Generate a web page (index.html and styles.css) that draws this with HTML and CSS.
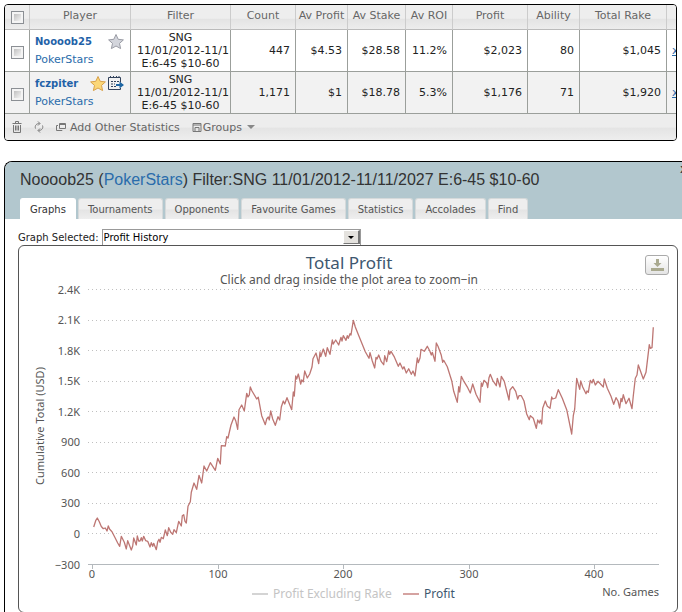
FILE: index.html
```html
<!DOCTYPE html>
<html lang="en">
<head>
<meta charset="utf-8">
<title>Player statistics</title>
<link rel="stylesheet" href="styles.css">
</head>
<body>
<section class="results">
  <table class="grid">
    <colgroup>
      <col class="c-check"><col class="c-player"><col class="c-filter"><col class="c-count"><col class="c-avprofit"><col class="c-stake"><col class="c-roi"><col class="c-profit"><col class="c-ability"><col class="c-rake"><col>
    </colgroup>
    <thead>
      <tr>
        <th><input type="checkbox" class="tick" aria-label="Select all"></th>
        <th>Player</th><th>Filter</th><th>Count</th><th>Av Profit</th><th>Av Stake</th><th>Av ROI</th><th>Profit</th><th>Ability</th><th>Total Rake</th><th></th>
      </tr>
    </thead>
    <tbody>
      <tr>
        <td class="center"><input type="checkbox" class="tick" aria-label="Select Noooob25"></td>
        <td class="player">
          <div class="name-row"><a class="name" href="#">Noooob25</a>
            <span class="marks"><svg width="18" height="18" viewBox="0 0 18 18"><path class="star-off" d="M9 1.500l2.200 4.800 5.200.6-3.900 3.500 1.100 5.200L9 13l-4.600 2.600 1.100-5.200L1.600 6.900l5.200-.6z"/></svg></span>
          </div>
          <a class="site" href="#">PokerStars</a>
        </td>
        <td class="filter">SNG<br>11/01/2012-11/11/2027<br>E:6-45 $10-60</td>
        <td>447</td><td>$4.53</td><td>$28.58</td><td>11.2%</td><td>$2,023</td><td>80</td><td>$1,045</td>
        <td class="more"><a href="#">x</a></td>
      </tr>
      <tr>
        <td class="center"><input type="checkbox" class="tick" aria-label="Select fczpiter"></td>
        <td class="player">
          <div class="name-row"><a class="name" href="#">fczpiter</a>
            <span class="marks"><svg width="18" height="18" viewBox="0 0 18 18"><path class="star-on" d="M9 1.500l2.200 4.800 5.200.6-3.900 3.500 1.100 5.200L9 13l-4.600 2.600 1.100-5.200L1.600 6.900l5.200-.6z"/></svg><svg width="18" height="18" viewBox="0 0 18 18"><path class="cal" d="M1.500 2.500h12v5M13.500 13v1.500h-12v-12M3.500 1v2M6.500 1v2M9.500 1v2M12 1v2"/><path class="cal-dots" d="M4 6.500h8M4 9h4M4 11.500h5"/><path class="cal-arrow" d="M9 9h3.500V6.500L17 10l-4.500 3.500V11H9z"/></svg></span>
          </div>
          <a class="site" href="#">PokerStars</a>
        </td>
        <td class="filter">SNG<br>11/01/2012-11/11/2027<br>E:6-45 $10-60</td>
        <td>1,171</td><td>$1</td><td>$18.78</td><td>5.3%</td><td>$1,176</td><td>71</td><td>$1,920</td>
        <td class="more"><a href="#">x</a></td>
      </tr>
    </tbody>
  </table>
  <div class="toolbar">
    <button type="button" class="tool" aria-label="Delete"><svg width="10" height="12" viewBox="0 0 10 12"><path class="ico" d="M.5 2.500h9M3.500 2V.5h3V2M1.500 4v7.500h7V4M3.500 4.500v5M5 4.500v5M6.500 4.500v5"/></svg></button>
    <button type="button" class="tool" aria-label="Refresh"><svg width="10" height="12" viewBox="0 0 10 12"><path class="ico" d="M1.500 7.500c-1-3 1-5 4-5M4 .5l2 2-2 2M8.500 4.500c1 3-1 5-4 5M6 7.500l-2 2 2 2"/></svg></button>
    <button type="button" class="tool"><svg width="10" height="12" viewBox="0 0 10 12"><path class="ico" d="M3.500 2.500h6v5h-6zM3.500 3.500h6M2 4.500H.5v5H6V9"/></svg><span>Add Other Statistics</span></button>
    <button type="button" class="tool groups"><svg width="10" height="12" viewBox="0 0 10 12"><path class="ico" d="M1 2.500h8v8H1zM1 4h8M3 10V6.500h4V10"/></svg><span>Groups</span><i class="caret"></i></button>
  </div>
</section>

<section class="detail">
  <header class="detail-head">
    <button type="button" class="close" aria-label="Close">x</button>
    <h1>Noooob25 (<a href="#">PokerStars</a>) Filter:SNG 11/01/2012-11/11/2027 E:6-45 $10-60</h1>
    <nav class="tabs">
      <a class="tab active" href="#">Graphs</a>
      <a class="tab" href="#">Tournaments</a>
      <a class="tab" href="#">Opponents</a>
      <a class="tab" href="#">Favourite Games</a>
      <a class="tab" href="#">Statistics</a>
      <a class="tab" href="#">Accolades</a>
      <a class="tab" href="#">Find</a>
    </nav>
  </header>
  <div class="picker">
    <label for="graph">Graph Selected:</label>
    <div class="select-box">
      <select id="graph"><option>Profit History</option></select>
      <span class="select-arrow"><i></i></span>
    </div>
  </div>
  <div class="chart">
    <button type="button" class="download" aria-label="Download chart"><svg width="14" height="14" viewBox="0 0 14 14"><path d="M6 1h3v4h2.500L7.500 9 3.500 5H6zM1 10h13v3H1z"/></svg></button>
    <svg class="plot" viewBox="19 247 658 366" role="img" aria-label="Total profit by number of games">
      <text class="title" x="349" y="270">Total Profit</text>
      <text class="subtitle" x="349" y="285">Click and drag inside the plot area to zoom−in</text>
      <path class="lines" d="M88 290.500H659M88 321.500H659M88 351.500H659M88 382.500H659M88 412.500H659M88 443.500H659M88 473.500H659M88 504.500H659M88 534.500H659"/>
      <path class="axis" d="M88 565.500H659M92.500 565v5M218.500 565v5M343.500 565v5M469.500 565v5M594.500 565v5"/>
      <g class="y-labels">
        <text x="80" y="295">2.4K</text><text x="80" y="325">2.1K</text><text x="80" y="356">1.8K</text><text x="80" y="386">1.5K</text><text x="80" y="417">1.2K</text><text x="80" y="447">900</text><text x="80" y="478">600</text><text x="80" y="508">300</text><text x="80" y="539">0</text><text x="80" y="570">−300</text>
      </g>
      <g class="x-labels">
        <text x="92" y="579">0</text><text x="218" y="579">100</text><text x="343" y="579">200</text><text x="469" y="579">300</text><text x="594" y="579">400</text>
      </g>
      <text class="axis-title" transform="translate(44 427) rotate(-90)">Cumulative Total (USD)</text>
      <text class="axis-title end" x="659" y="597">No. Games</text>
      <polyline class="series" points="93.7,528 95.7,521.7 97.3,519 99.3,522.7 101.3,527.5 103.3,529.7 105.3,529 107,532 108.3,527 109.7,530.3 112,532.7 114.7,538 117.7,544 119.7,547.3 121.3,537.3 124.3,543.3 126.3,550 127.7,541.7 131.3,551 132.7,547 133.7,539 136.3,546 137.3,537 138.7,542 140,542 141.3,538.7 142.3,542 143.7,537.3 145.7,541.7 147.7,542.3 150,548 151.3,543.7 152.7,547.3 153.7,544.3 156.3,550.7 157.7,542.7 159,540.3 160,543.3 161.3,538.3 163.3,539.7 165.3,531 167.3,536.7 168.7,528.7 170.7,533.3 172.7,535.3 174,530.7 176.3,533.7 178.7,522.3 181.3,527 182.3,516.7 183.7,515.7 185,522.3 186.3,524 188,507.3 190.3,502.7 191.3,493.3 194,484 196.7,490.3 199,476.3 201.7,484 204,467 206.7,472 210.3,463.7 215.3,471.3 217.7,459.3 220.3,465 221.3,446.7 225.3,447 226.7,437.7 228,439 231,426 234,418 235.7,421.7 237.7,430.3 239,410.7 241.7,406 244.3,412 246.7,394.3 248,398 249.3,396 250.3,388 252,392 256.7,400 258.3,398.3 261.7,416.7 265.3,425.7 266.7,420 268.3,418 269.3,421 270.7,412 272.7,420 275.3,426.3 278,417.7 279.7,421 281.3,408 283.3,402 284.7,405 287,398.7 291.7,410.7 293.3,393 294.3,397 295.7,377 296.7,380 298.3,375 300.7,385 301.7,381 303.3,382.7 304.7,372 307.3,379 309.7,375 312,368 313,359.7 316,354 318.7,364.7 320,353 320.7,357.7 323.3,350 325.7,357.3 327.3,348.7 330,355.3 332.3,341 333.3,345 335.7,341 338.7,346 341,338.3 342,342 343.3,336.7 346,341.3 347.3,336.7 348.3,339.3 350,334.7 351,336 353.3,321.3 355.3,328 359,337.3 365.3,352.7 369,359.3 370,353.7 372.3,362 374.7,369 376,358.3 377,360 378.7,356 381.3,362.7 383.7,365.7 384.7,356.7 386.7,362.7 388.7,352 389.7,355.3 391,352.3 394,357.3 398.3,367.3 400,364 402.7,370 404,367.7 406.3,374 408.7,369.7 411.3,375.3 413,372 415,377 417.3,359 418.3,363.7 420,359 421,350.3 424.3,352.3 427.3,347.3 429.7,351.7 431.3,356 432.3,353.3 435,362.3 436.3,344 438,347.3 441.3,356.3 442.7,363.3 443.7,361.3 447.3,367.7 451.7,381.7 453.7,392.3 457.3,403.3 458.7,387.7 459.7,393 461.3,377.3 463.3,381.3 467.7,388.7 470.3,394 472.7,385 476,395.3 480,403.3 481.3,384 482.3,387.3 484,381.3 486.7,384 487.7,388.7 489,378.7 490.3,375.3 492.7,381.3 496.3,386.7 497.3,379.3 500,388 501.3,377.3 504.3,382.3 506.7,392 509,401 510,391 512.7,387.7 515.7,392.3 517.7,400 519,396.7 521.3,396.7 524,402 526.7,415 529.3,420.7 530.3,416.7 533.3,419.3 536.3,429.3 537.7,421 539.3,424 540.3,421 541.7,425 542.7,409.3 545.3,402 547.3,407.3 550,409.3 551.7,398 552.7,400 555.7,399 558.3,390.7 562.3,399.3 566.7,410.7 571.7,435 573.3,416.7 574.7,410 576.7,379.3 579.7,390.3 580.7,382 582.7,388 586,394.7 587,392 588.3,393.3 590.3,381.3 592,384 593.3,380.3 595.3,386 598,382.3 603.3,388 604.3,380 607.3,389.3 611,397.3 613.7,405.3 616,398.7 618,402 619.7,409 621,399.3 622,402.7 623.3,395.7 626,404.7 629,399.3 632,409.7 633.3,396.7 635.3,379.3 637,376 638.3,366 643.3,380 646,373.3 649.3,345.7 650.3,349.3 652,348.7 653.3,328.3"/>
      <path class="key-off" d="M252 595h16"/><text class="legend off" x="273" y="599">Profit Excluding Rake</text>
      <path class="key-on" d="M403 595h16"/><text class="legend" x="424" y="599">Profit</text>
    </svg>
  </div>
</section>
</body>
</html>
```
FILE: styles.css
```css
* { box-sizing: border-box; }
html { height: 100%; }
body {
  margin: 0;
  height: 100%;
  padding: 4px 0 0 4px;
  overflow: hidden;
  background: #fff;
  font-family: "DejaVu Sans", sans-serif;
  font-size: 11px;
  color: #222;
}
a { text-decoration: none; color: #2a6cab; }
button { font: inherit; color: inherit; background: none; border: 0; padding: 0; }

.results {
  margin-right: 5px;
  border: 1px solid #000;
  border-radius: 4px;
  overflow: hidden;
  background: #eee;
}
.grid { width: 100%; table-layout: fixed; border-collapse: separate; border-spacing: 0; }
.c-check { width: 25px; }
.c-player { width: 101px; }
.c-filter { width: 100px; }
.c-count { width: 65px; }
.c-avprofit { width: 52px; }
.c-stake { width: 58px; }
.c-roi { width: 47px; }
.c-profit { width: 75px; }
.c-ability { width: 52px; }
.c-rake { width: 87px; }
.grid th {
  height: 25px;
  padding: 0 0 4px;
  font-size: 11px;
  font-weight: normal;
  color: #666;
  white-space: nowrap;
  background: linear-gradient(#eee 55%, #e4e4e4 60%, #ededed);
  border-right: 1px solid #ccc;
  border-bottom: 1px solid #bbb;
}
.grid th:first-child { padding-bottom: 0; }
.grid td {
  height: 42px;
  padding: 0 5px 0 0;
  text-align: right;
  font-size: 11px;
  overflow: hidden;
  white-space: nowrap;
  background: #fff;
  border-right: 1px solid #9b9f9b;
  border-bottom: 1px solid #9b9f9b;
}
.grid tbody tr:last-child td { background: #f2f2f2; }
.grid tr > :last-child { border-right: 0; }
.grid td.center { padding: 4px 0 0; text-align: center; }
.grid td.player { padding: 0 5px; text-align: left; }
.grid td.filter { padding: 0 6px; text-align: center; line-height: 13px; }
.grid td.more { padding: 0 0 0 5px; text-align: left; }
.more a { text-decoration: underline; }
.tick {
  appearance: none;
  display: inline-block;
  vertical-align: middle;
  width: 13px;
  height: 13px;
  margin: 0;
  border: 1px solid #8b8f94;
  background: linear-gradient(135deg, #c0c0c0, #f4f4f4) content-box, #f4f4f4;
  padding: 2px;
}
.name-row { display: flex; justify-content: space-between; align-items: center; height: 18px; }
.name { font-weight: bold; font-size: 10px; color: #1f62a8; }
.marks { display: flex; }
.site { display: block; line-height: 18px; }
.star-off { fill: #d3d5dc; stroke: #9a9ca5; stroke-width: 1; }
.star-on { fill: #fbd778; stroke: #d9a24a; stroke-width: 1; }
.cal { fill: none; stroke: #33435c; stroke-width: 1; }
.cal-dots { fill: none; stroke: #33435c; stroke-width: 1; stroke-dasharray: 2 1; }
.cal-arrow { fill: #1f66a3; }

.toolbar {
  display: flex;
  align-items: center;
  gap: 12px;
  height: 26px;
  padding: 0 8px 0 7px;
  color: #666;
  background: linear-gradient(#ededed 50%, #e4e4e4 55%, #eee);
}
.tool { display: flex; align-items: center; gap: 4px; }
.groups { gap: 1px; }
.ico { fill: none; stroke: #777; stroke-width: 1; }
.caret { margin-left: 4px; border: 4px solid transparent; border-top-color: #888; border-bottom: 0; }

.detail {
  position: relative;
  margin-top: 20px;
  border: 1px solid #000;
  border-right: 0;
  border-bottom: 0;
  border-radius: 8px 0 0 0;
  overflow: hidden;
}
.detail-head { padding: 8px 0 0 15px; background: #b2c7ce; }
.close { position: absolute; top: 0; right: -5px; color: #222; font-size: 12px; }
h1 {
  margin: 0;
  font: 16px/20px "Liberation Sans", Arial, sans-serif;
  color: #333;
  white-space: nowrap;
}
.tabs { display: flex; gap: 2px; padding-top: 8px; }
.tab {
  height: 21px;
  padding: 0 9px;
  line-height: 22px;
  font-size: 10px;
  color: #555;
  background: linear-gradient(#eee 50%, #e4e4e4 55%, #eee);
  border: 1px solid #d5d9da;
  border-bottom: 0;
  border-radius: 3px 3px 0 0;
}
.tab.active { background: #fff; border-color: #fff; color: #333; }

.picker { display: flex; align-items: center; gap: 3px; padding: 10px 0 0 13px; font-size: 10px; }
.select-box { position: relative; width: 259px; }
select {
  appearance: none;
  display: block;
  width: 100%;
  height: 16px;
  padding: 0 20px 0 1px;
  border: 1px solid #999;
  border-bottom: 0;
  border-radius: 0;
  background: #fff;
  color: #000;
  font: 10px "DejaVu Sans", sans-serif;
}
.select-arrow {
  position: absolute;
  top: 1px;
  right: 1px;
  display: flex;
  align-items: center;
  justify-content: center;
  width: 17px;
  height: 14px;
  background: #e4e2de;
  border: 1px solid #fff;
  border-right: 2px solid #777;
  border-bottom-color: #777;
  pointer-events: none;
}
.select-arrow i { border: 3px solid transparent; border-top-color: #000; border-bottom: 0; }

.chart {
  position: relative;
  margin: 0 4px 0 13px;
  border: 1px solid #555;
  border-radius: 6px;
}
.plot { display: block; width: 100%; font-family: "Noto Sans", sans-serif; }
.download {
  position: absolute;
  top: 9px;
  right: 8px;
  display: flex;
  align-items: center;
  justify-content: center;
  width: 24px;
  height: 20px;
  border: 1px solid #aaa;
  border-radius: 3px;
  background: linear-gradient(#fff, #e4e4e4);
}
.download path { fill: #a9a98f; }
.title { font-size: 17px; fill: #3e576f; text-anchor: middle; }
.subtitle { font-size: 12px; fill: #555; text-anchor: middle; }
.lines { fill: none; stroke: #c0c0c0; stroke-width: 1; stroke-dasharray: 1 3; }
.axis { fill: none; stroke: #b4b9bd; stroke-width: 1; }
.y-labels { font-size: 11px; fill: #555; text-anchor: end; }
.x-labels { font-size: 11px; fill: #555; text-anchor: middle; }
.axis-title { font-size: 11px; fill: #555; text-anchor: middle; }
.axis-title.end { text-anchor: end; }
.series { fill: none; stroke: #bd7673; stroke-width: 1.3; stroke-linejoin: round; }
.legend { font-size: 12px; fill: #3e576f; }
.legend.off { fill: #c4c4c4; }
.key-off { stroke: #d4d4d4; stroke-width: 2; }
.key-on { stroke: #d5a3a1; stroke-width: 2; }
```
